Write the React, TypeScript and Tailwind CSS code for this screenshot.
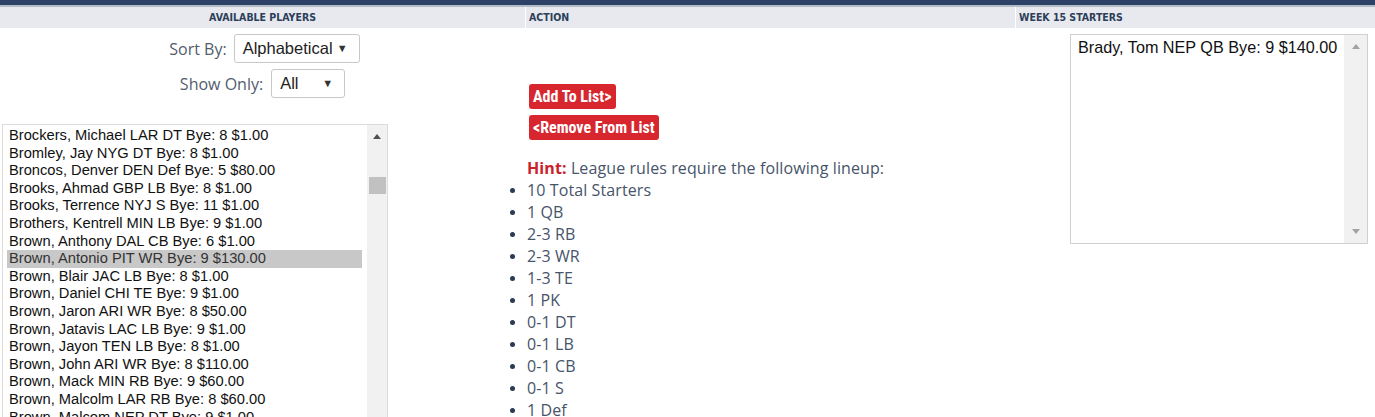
import React from 'react';

const players = [
  'Brockers, Michael LAR DT Bye: 8 $1.00',
  'Bromley, Jay NYG DT Bye: 8 $1.00',
  'Broncos, Denver DEN Def Bye: 5 $80.00',
  'Brooks, Ahmad GBP LB Bye: 8 $1.00',
  'Brooks, Terrence NYJ S Bye: 11 $1.00',
  'Brothers, Kentrell MIN LB Bye: 9 $1.00',
  'Brown, Anthony DAL CB Bye: 6 $1.00',
  'Brown, Antonio PIT WR Bye: 9 $130.00',
  'Brown, Blair JAC LB Bye: 8 $1.00',
  'Brown, Daniel CHI TE Bye: 9 $1.00',
  'Brown, Jaron ARI WR Bye: 8 $50.00',
  'Brown, Jatavis LAC LB Bye: 9 $1.00',
  'Brown, Jayon TEN LB Bye: 8 $1.00',
  'Brown, John ARI WR Bye: 8 $110.00',
  'Brown, Mack MIN RB Bye: 9 $60.00',
  'Brown, Malcolm LAR RB Bye: 8 $60.00',
  'Brown, Malcom NEP DT Bye: 9 $1.00',
];

const lineup = ['10 Total Starters', '1 QB', '2-3 RB', '2-3 WR', '1-3 TE', '1 PK', '0-1 DT', '0-1 LB', '0-1 CB', '0-1 S', '1 Def'];

const Arrow = ({ up, color }: { up: boolean; color: string }) => (
  <svg width="8" height="5" viewBox="0 0 8 5" className="block">
    <polygon points={up ? '0,5 8,5 4,0' : '0,0 8,0 4,5'} fill={color} />
  </svg>
);

const FakeSelect = ({ value, width }: { value: string; width: string }) => (
  <div
    className={`${width} h-[29px] flex items-center justify-between pl-[8px] pr-[11px] border border-[#c8c8c8] rounded-[3px] bg-white font-['Liberation_Sans',Arial,sans-serif] text-[16.5px] text-[#222]`}
  >
    <span>{value}</span>
    <span className="text-[11px] text-[#333]">▼</span>
  </div>
);

export default function App() {
  return (
    <div className="w-[1375px] h-[417px] overflow-hidden bg-white font-['Open_Sans',sans-serif]">
      <div className="h-[5px] bg-[#2d4066]" />
      <div className="h-[2px] bg-[#b4bac6]" />
      <div className="grid grid-cols-[525px_1px_489px_1px_1fr] h-[21px] bg-[#e7e9ee] font-['Liberation_Sans_Narrow','DejaVu_Sans_Condensed',sans-serif] font-bold text-[10.5px] text-[#2c3e5a] uppercase">
        <div className="flex items-center justify-center">Available Players</div>
        <div className="bg-white" />
        <div className="flex items-center pl-[3px]">Action</div>
        <div className="bg-white" />
        <div className="flex items-center pl-[3px]">Week 15 Starters</div>
      </div>

      <div className="flex">
        {/* available players */}
        <div className="w-[526px] flex flex-col">
          <div className="flex flex-col items-center pt-[6px] gap-[6px] text-[16px] text-[#525c6d]">
            <div className="flex items-center gap-[7px] pl-[3px]">
              <span>Sort By:</span>
              <FakeSelect value="Alphabetical" width="w-[126px]" />
            </div>
            <div className="flex items-center gap-[8px] pr-[1px]">
              <span>Show Only:</span>
              <FakeSelect value="All" width="w-[74px]" />
            </div>
          </div>
          <div className="mt-[26px] ml-[2px] w-[386px] h-[320px] flex border border-[#dcdcdc] bg-white">
            <div className="flex-1 pl-[4px] pt-[2px] font-['Liberation_Sans',Arial,sans-serif] text-[14.7px] leading-[17.6px] text-[#111]">
              {players.map((p, i) => (
                <div key={p} className={`pl-[2px] whitespace-nowrap ${i === 7 ? 'bg-[#c8c8c8] text-[#333]' : ''} mr-[5px]`}>
                  {p}
                </div>
              ))}
            </div>
            <div className="w-[20px] bg-[#f1f1f1] flex flex-col items-center">
              <div className="mt-[9px]">
                <Arrow up color="#505050" />
              </div>
              <div className="mt-[38px] w-[17px] h-[17px] bg-[#c1c1c1]" />
            </div>
          </div>
        </div>

        {/* action */}
        <div className="w-[490px] pl-[3px] pt-[56px]">
          <div className="flex flex-col items-start gap-[6px] font-['Roboto',sans-serif] font-bold font-stretch-condensed text-[16px] text-white">
            <button className="h-[25px] px-[4px] bg-[#d7262e] rounded-[3px]">Add To List&gt;</button>
            <button className="h-[25px] px-[4px] bg-[#d7262e] rounded-[3px]">&lt;Remove From List</button>
          </div>
          <div className="mt-[17px] -ml-[2px] text-[16px] leading-[22px] tracking-[0.1px] text-[#47546a]">
            <div>
              <span className="font-bold text-[#cc2229]">Hint:</span> League rules require the following lineup:
            </div>
            {lineup.map((l) => (
              <div key={l} className="flex items-center -ml-[17px]">
                <span className="w-[5px] h-[5px] rounded-full bg-[#2b3a55] mr-[12px]" />
                <span>{l}</span>
              </div>
            ))}
          </div>
        </div>

        {/* starters */}
        <div className="flex-1 pt-[6px] pl-[54px]">
          <div className="w-[298px] h-[210px] flex border border-[#d0d0d0] bg-white">
            <div className="flex-1 pl-[7px] pt-[3px] font-['Liberation_Sans',Arial,sans-serif] text-[16.2px] leading-[19px] text-[#111] whitespace-nowrap">
              Brady, Tom NEP QB Bye: 9 $140.00
            </div>
            <div className="w-[23px] bg-[#f1f1f1] flex flex-col items-center justify-between py-[9px]">
              <Arrow up color="#a3a3a3" />
              <Arrow up={false} color="#a3a3a3" />
            </div>
          </div>
        </div>
      </div>
    </div>
  );
}
